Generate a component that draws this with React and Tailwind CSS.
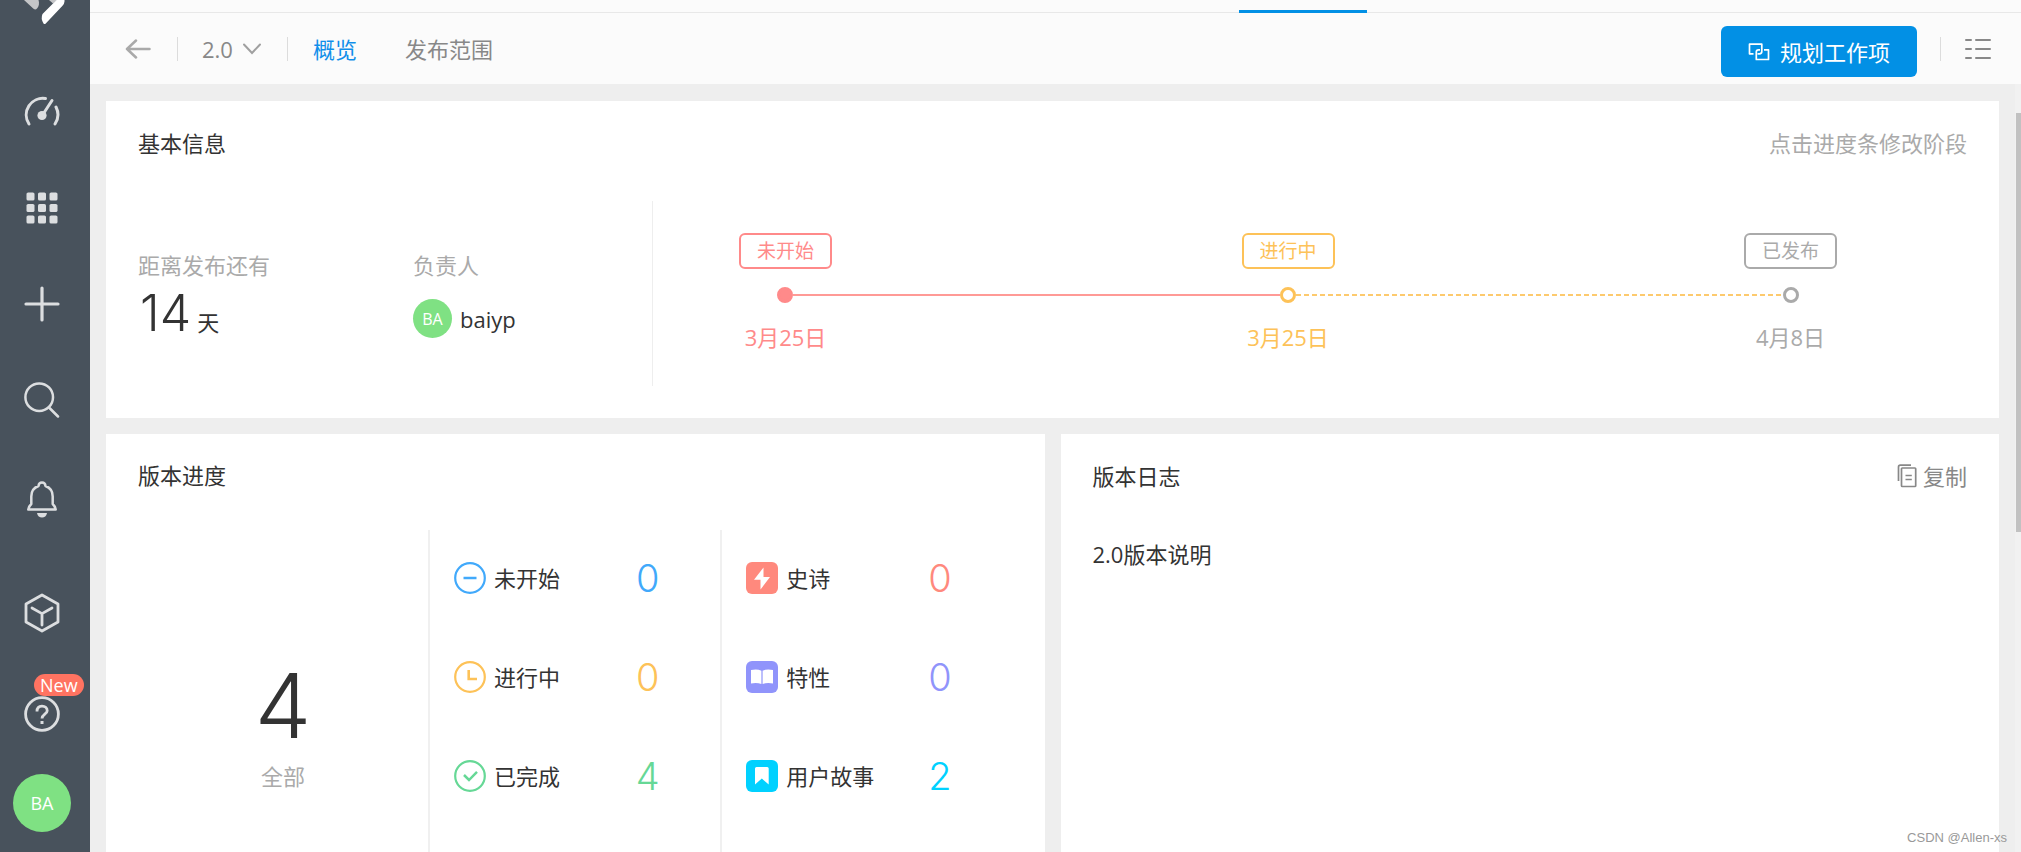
import React from "react";

const LogoMark = () => (
  <svg width="84" height="26" viewBox="0 0 84 26" aria-hidden="true">
    <path d="M24 0H38.500C39.500 3 39 6.500 37 8.500Q35.500 10.500 33.500 8.800Z" fill="#c4c5c7" />
    <path d="M49 0H57L53 3.500Z" fill="#c4c5c7" />
    <path d="M56.500 0H64.500V1.500Q64.300 4 62.500 5.800L45.500 23.800Q44.500 24.500 43.500 23.500Q40.500 18.500 42.500 14Z" fill="#ffffff" />
  </svg>
);

const GaugeIcon = () => (
  <svg width="36" height="32" viewBox="0 0 36 32" fill="none" stroke="currentColor" strokeWidth="3" strokeLinecap="round" aria-hidden="true">
    <path d="M5 28A16.500 16.500 0 0 1 21.500 2.600" />
    <path d="M32 11A17 17 0 0 1 31 28" />
    <path d="M28 4.500L19.500 17.500" />
    <circle cx="18" cy="19.500" r="4.600" fill="currentColor" stroke="none" />
  </svg>
);

const GridIcon = () => (
  <svg width="32" height="32" viewBox="0 0 32 32" fill="currentColor" aria-hidden="true">
    {[0.5, 12, 23.5].map((y) =>
      [0.5, 12, 23.5].map((x) => <rect key={`${x}-${y}`} x={x} y={y} width="8" height="8" rx="1.6" />)
    )}
  </svg>
);

const PlusIcon = () => (
  <svg width="36" height="36" viewBox="0 0 36 36" fill="none" stroke="currentColor" strokeWidth="3.200" strokeLinecap="round" aria-hidden="true">
    <path d="M18 2V34M2 18H34" />
  </svg>
);

const SearchIcon = () => (
  <svg width="36" height="36" viewBox="0 0 36 36" fill="none" stroke="currentColor" strokeWidth="2.500" strokeLinecap="round" aria-hidden="true">
    <circle cx="15.200" cy="15.200" r="13.800" />
    <path d="M25 25.500L34 34.500" />
  </svg>
);

const BellIcon = () => (
  <svg width="32" height="38" viewBox="0 0 32 38" aria-hidden="true">
    <path
      d="M2.300 28.600H29.700C29.200 26 28.200 24.300 26.700 23V15.500C26.700 10.300 23.800 6.500 19.500 5C19.300 2.900 17.900 1.500 16 1.500S12.700 2.900 12.500 5C8.200 6.500 5.300 10.300 5.300 15.500V23C3.800 24.300 2.800 26 2.300 28.600Z"
      fill="none"
      stroke="currentColor"
      strokeWidth="2.500"
      strokeLinejoin="round"
    />
    <path d="M11 32H21C20.500 35 18.500 36.500 16 36.500S11.500 35 11 32Z" fill="currentColor" />
  </svg>
);

const CubeIcon = () => (
  <svg width="36" height="40" viewBox="0 0 36 40" fill="none" stroke="currentColor" strokeWidth="2.800" strokeLinejoin="round" aria-hidden="true">
    <path d="M18 2L34 11V29L18 38L2 29V11Z" />
    <path d="M8 15L18 20.600L28 15M18 20.600V32" strokeLinecap="round" />
  </svg>
);

const HelpIcon = () => (
  <svg width="36" height="36" viewBox="0 0 36 36" fill="none" stroke="currentColor" aria-hidden="true">
    <circle cx="18" cy="18" r="16.400" strokeWidth="2.800" />
    <path d="M13 15.500C13 12 15 10.200 18 10.200C21 10.200 23.200 11.900 23.200 14.700C23.200 18.200 18 18.300 18 22.600" strokeWidth="2.800" />
    <rect x="16.500" y="25" width="3" height="3" fill="currentColor" stroke="none" />
  </svg>
);

const BackIcon = () => (
  <svg width="26" height="20" viewBox="0 0 26 20" fill="none" stroke="currentColor" strokeWidth="2.500" strokeLinecap="round" strokeLinejoin="round" aria-hidden="true">
    <path d="M11 1.500L2 10L11 18.500M2 10H24.500" />
  </svg>
);

const ChevronIcon = () => (
  <svg width="18" height="12" viewBox="0 0 18 12" fill="none" stroke="currentColor" strokeWidth="2" strokeLinecap="round" aria-hidden="true">
    <path d="M1 1.500L9 10L17 1.500" />
  </svg>
);

const LinkedIcon = () => (
  <svg width="22" height="18" viewBox="0 0 22 18" fill="none" stroke="currentColor" strokeWidth="1.700" strokeLinejoin="round" aria-hidden="true">
    <path d="M5.500 10.800H1.500V1.200H13.800V8.500Q13.800 10.800 11.500 10.800H9.500" />
    <path d="M16 6.800H20.500V16.500H8.300V9Q8.300 6.800 10.500 6.800H12" />
  </svg>
);

const ListIcon = () => (
  <svg width="26" height="22" viewBox="0 0 26 22" stroke="currentColor" strokeWidth="2" strokeLinecap="round" aria-hidden="true">
    <path d="M1 2H6M11 2H25M1 11H6M11 11H25M1 20H6M11 20H25" />
  </svg>
);

const CopyIcon = () => (
  <svg width="20" height="24" viewBox="0 0 20 24" fill="none" stroke="currentColor" strokeWidth="1.700" strokeLinejoin="round" aria-hidden="true">
    <path d="M1.500 17V3Q1.500 1.200 3.300 1.200H14" />
    <rect x="4.500" y="4" width="14.200" height="18.500" rx="0.800" />
    <path d="M8.500 11.500H14.800M8.500 15.500H14.800" />
  </svg>
);

const PendingIcon = () => (
  <svg width="32" height="32" viewBox="0 0 32 32" fill="none" stroke="#41a9fb" strokeWidth="2.200" aria-hidden="true">
    <circle cx="16" cy="16" r="14.800" />
    <path d="M9.500 16H22.500" strokeWidth="2.500" />
  </svg>
);

const ClockIcon = () => (
  <svg width="32" height="32" viewBox="0 0 32 32" fill="none" stroke="#fdc258" strokeWidth="2.200" aria-hidden="true">
    <circle cx="16" cy="16" r="14.800" />
    <path d="M14.700 9V18H23" strokeWidth="2.600" />
  </svg>
);

const DoneIcon = () => (
  <svg width="32" height="32" viewBox="0 0 32 32" fill="none" stroke="#66d896" strokeWidth="2.200" aria-hidden="true">
    <circle cx="16" cy="16" r="14.800" />
    <path d="M10 15L15 20L23 11.800" strokeWidth="2.500" />
  </svg>
);

const EpicIcon = () => (
  <svg width="32" height="32" viewBox="0 0 32 32" aria-hidden="true">
    <rect width="32" height="32" rx="6" fill="#ff897d" />
    <path d="M17.500 5.500L8 17.800H14.500L14.500 27.500L24 15H17.500Z" fill="#fff" />
  </svg>
);

const FeatureIcon = () => (
  <svg width="32" height="32" viewBox="0 0 32 32" aria-hidden="true">
    <rect width="32" height="32" rx="6" fill="#9094fb" />
    <path d="M5 9Q11 7.500 15.400 9.700V23Q11 21.500 5 22.500Z" fill="#fff" />
    <path d="M27 9Q21 7.500 16.600 9.700V23Q21 21.500 27 22.500Z" fill="#fff" />
  </svg>
);

const StoryIcon = () => (
  <svg width="32" height="32" viewBox="0 0 32 32" aria-hidden="true">
    <rect width="32" height="32" rx="6" fill="#00d1ff" />
    <path d="M9 8.500Q9 7 10.500 7H21.200Q22.700 7 22.700 8.500V24.500L15.850 18.500L9 24.500Z" fill="#fff" />
  </svg>
);

const NavButton = ({ label, size, children }) => (
  <button type="button" aria-label={label} className={`flex w-full items-center justify-center ${size}`}>
    {children}
  </button>
);

function Sidebar() {
  return (
    <nav aria-label="主导航" className="flex w-[90px] shrink-0 flex-col items-center bg-[#48525c] pr-1.5 text-[#dcdee0]">
      <a href="#home" aria-label="首页" className="block h-16">
        <LogoMark />
      </a>
      <NavButton label="工作台" size="h-24"><GaugeIcon /></NavButton>
      <NavButton label="应用" size="h-24"><GridIcon /></NavButton>
      <NavButton label="新建" size="h-24"><PlusIcon /></NavButton>
      <NavButton label="搜索" size="h-24"><SearchIcon /></NavButton>
      <NavButton label="通知" size="h-[104px]"><BellIcon /></NavButton>
      <NavButton label="产品" size="h-[122px]"><CubeIcon /></NavButton>
      <button type="button" aria-label="帮助" className="relative flex h-20 w-full items-center justify-center">
        <HelpIcon />
        <span className="absolute top-0 left-[34px] rounded-full bg-[#ff7361] px-1.5 text-[18px] leading-[22px] text-white">New</span>
      </button>
      <button type="button" className="mt-5 flex size-[58px] items-center justify-center rounded-full bg-[#7fe183] text-[18px] text-white">
        BA
      </button>
    </nav>
  );
}

const Divider = () => <span className="h-6 w-px bg-[#dcdcdc]" />;

function Toolbar() {
  return (
    <header className="bg-[#fbfbfb]">
      <div className="flex h-[13px] border-b border-[#e8e8e8]">
        <div className="relative w-full">
          <span className="absolute left-[59.5%] top-[10px] h-[3px] w-32 bg-[#0290e5]" />
        </div>
      </div>
      <div className="flex h-[71px] items-center pl-[35px] pr-[30px] text-[22px] leading-8">
        <button type="button" aria-label="返回" className="text-[#a9a9a9]"><BackIcon /></button>
        <span className="ml-[26px] flex"><Divider /></span>
        <button type="button" className="ml-6 flex items-center gap-2.5 text-[#888888]">
          2.0
          <span className="text-[#a0a0a0]"><ChevronIcon /></span>
        </button>
        <span className="ml-[26px] flex"><Divider /></span>
        <a href="#overview" className="ml-[25px] text-[#118fea]">概览</a>
        <a href="#scope" className="ml-12 text-[#888888]">发布范围</a>
        <div className="ml-auto flex items-center">
          <button type="button" className="mt-1.5 flex h-[51px] items-center gap-2.5 rounded-md bg-[#0290e5] px-[27px] text-white">
            <LinkedIcon />
            规划工作项
          </button>
          <span className="ml-[23px] flex"><Divider /></span>
          <button type="button" aria-label="列表" className="ml-6 text-[#888888]"><ListIcon /></button>
        </div>
      </div>
    </header>
  );
}

const stages = [
  { name: "未开始", date: "3月25日", tone: "border-[#ff8a8a] text-[#ff8a8a]", dot: "border-[#ff8a8a] bg-[#ff8a8a]", line: "bg-[#ff9a96]" },
  { name: "进行中", date: "3月25日", tone: "border-[#fdc258] text-[#fdc258]", dot: "border-[#fdc258]", line: "bg-[repeating-linear-gradient(90deg,#fdca6e_0_5px,transparent_5px_8px)]" },
  { name: "已发布", date: "4月8日", tone: "border-[#aaaaaa] text-[#aaaaaa]", dot: "border-[#aaaaaa]", line: null },
];

function Timeline() {
  return (
    <div className="flex flex-1 flex-col pl-[86px] pr-[162px] pt-8">
      <div className="flex justify-between">
        {stages.map((s) => (
          <button type="button" key={s.name} className={`h-9 w-[93px] rounded-md border-2 text-[19px] leading-8 ${s.tone}`}>{s.name}</button>
        ))}
      </div>
      <div className="mt-[18px] flex items-center px-[38px]">
        {stages.map((s) => (
          <React.Fragment key={s.name}>
            <span className={`size-4 shrink-0 rounded-full border-3 ${s.dot}`} />
            {s.line && <span className={`h-0.5 flex-1 ${s.line}`} />}
          </React.Fragment>
        ))}
      </div>
      <div className="mt-[18px] flex justify-between text-[22px] leading-8">
        {stages.map((s) => (
          <span key={s.name} className={`w-[93px] text-center ${s.tone}`}>{s.date}</span>
        ))}
      </div>
    </div>
  );
}

function BasicInfo() {
  return (
    <section className="bg-white pb-8 pt-[26px]">
      <div className="flex justify-between px-8">
        <h2>基本信息</h2>
        <span className="text-[#aaaaaa]">点击进度条修改阶段</span>
      </div>
      <div className="mt-[42px] flex h-[185px]">
        <div className="grid w-[547px] shrink-0 grid-cols-[275px_1fr] border-r border-[#eeeeee] pl-8 pt-12">
          <div>
            <div className="text-[#aaaaaa]">距离发布还有</div>
            <div className="flex items-baseline gap-1.5 pl-0.5 leading-[64px]">
              <span className="font-['Inter',sans-serif] text-[50px] font-light">14</span>
              <span>天</span>
            </div>
          </div>
          <div>
            <div className="text-[#aaaaaa]">负责人</div>
            <div className="mt-[18px] flex items-center gap-2">
              <span className="flex size-[39px] items-center justify-center rounded-full bg-[#7fe183] text-[16px] text-white">BA</span>
              <span>baiyp</span>
            </div>
          </div>
        </div>
        <Timeline />
      </div>
    </section>
  );
}

const statusRows = [
  { icon: <PendingIcon />, label: "未开始", value: 0, tone: "text-[#41a9fb]" },
  { icon: <ClockIcon />, label: "进行中", value: 0, tone: "text-[#fdc258]" },
  { icon: <DoneIcon />, label: "已完成", value: 4, tone: "text-[#66d896]" },
];

const typeRows = [
  { icon: <EpicIcon />, label: "史诗", value: 0, tone: "text-[#ff897d]" },
  { icon: <FeatureIcon />, label: "特性", value: 0, tone: "text-[#9094fb]" },
  { icon: <StoryIcon />, label: "用户故事", value: 2, tone: "text-[#00d1ff]" },
];

const StatList = ({ rows }) => (
  <ul className="flex flex-col gap-[3px] border-l-2 border-[#f0f0f0]">
    {rows.map((r) => (
      <li key={r.label} className="grid h-24 grid-cols-2 items-center">
        <span className="flex items-center gap-2 whitespace-nowrap pl-6 [&>svg]:shrink-0">
          {r.icon}
          {r.label}
        </span>
        <span className={`text-center font-['Inter',sans-serif] text-[38px] font-light leading-10 ${r.tone}`}>{r.value}</span>
      </li>
    ))}
  </ul>
);

function VersionProgress() {
  return (
    <section className="flex flex-col bg-white px-8 pt-[25px]">
      <h2>版本进度</h2>
      <div className="mt-[39px] grid flex-1 grid-cols-[290px_1fr_1fr]">
        <div className="flex flex-col items-center pt-[130px]">
          <span className="font-['Inter',sans-serif] text-[90px] font-light leading-[92px]">4</span>
          <span className="mt-2 text-[#aaaaaa]">全部</span>
        </div>
        <StatList rows={statusRows} />
        <StatList rows={typeRows} />
      </div>
    </section>
  );
}

function VersionLog() {
  return (
    <section className="bg-white px-8 pt-[26px]">
      <div className="flex justify-between">
        <h2>版本日志</h2>
        <button type="button" className="flex items-center gap-1.5 text-[#888888]">
          <CopyIcon />
          复制
        </button>
      </div>
      <p className="mt-[46px]">2.0版本说明</p>
    </section>
  );
}

export default function App() {
  return (
    <div className="relative flex min-h-screen bg-[#eeeeee] font-['Open_Sans','Noto_Sans_CJK_SC',sans-serif] text-[#333333]">
      <Sidebar />
      <div className="flex min-w-0 flex-1 flex-col">
        <Toolbar />
        <div className="flex flex-1">
          <main className="flex min-w-0 flex-1 flex-col gap-4 px-4 pt-[17px] text-[22px] leading-8">
            <BasicInfo />
            <div className="grid flex-1 grid-cols-2 gap-4">
              <VersionProgress />
              <VersionLog />
            </div>
          </main>
          <div className="w-1.5 bg-[#f1f1f1] pl-px pt-[29px]">
            <div className="h-[419px] bg-[#c1c1c1]" />
          </div>
        </div>
      </div>
      <span className="absolute bottom-1 right-[14px] font-['Liberation_Sans',sans-serif] text-[13px] leading-5 text-[#999999]">CSDN @Allen-xs</span>
    </div>
  );
}
